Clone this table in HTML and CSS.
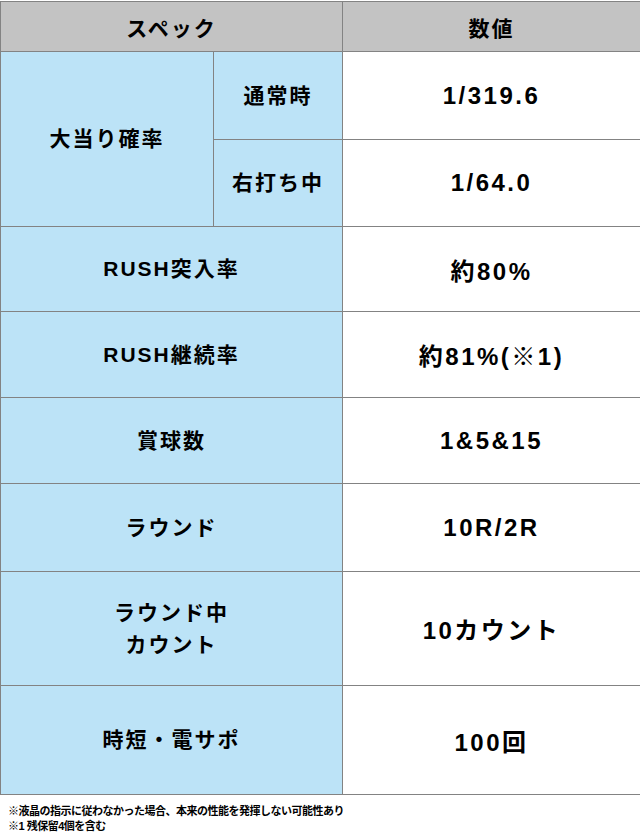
FILE: index.html
```html
<!DOCTYPE html>
<html lang="ja">
<head>
<meta charset="utf-8">
<link rel="stylesheet" href="styles.css">
</head>
<body>
<table class="spec">
  <colgroup><col class="c1"><col class="c2"><col class="c3"></colgroup>
  <tr class="r-head"><th colspan="2" class="head">スペック</th><th class="head">数値</th></tr>
  <tr class="r1"><td rowspan="2" class="lab">大当り確率</td><td class="lab">通常時</td><td class="val">1/319.6</td></tr>
  <tr class="r2"><td class="lab">右打ち中</td><td class="val">1/64.0</td></tr>
  <tr class="r3"><td colspan="2" class="lab">RUSH突入率</td><td class="val">約80%</td></tr>
  <tr class="r4"><td colspan="2" class="lab">RUSH継続率</td><td class="val">約81%(※1)</td></tr>
  <tr class="r5"><td colspan="2" class="lab">賞球数</td><td class="val">1&amp;5&amp;15</td></tr>
  <tr class="r6"><td colspan="2" class="lab">ラウンド</td><td class="val">10R/2R</td></tr>
  <tr class="r7"><td colspan="2" class="lab">ラウンド中<br>カウント</td><td class="val">10カウント</td></tr>
  <tr class="r8"><td colspan="2" class="lab">時短・電サポ</td><td class="val">100回</td></tr>
</table>
<div class="notes">
  <p>※液晶の指示に従わなかった場合、本来の性能を発揮しない可能性あり</p>
  <p>※1 残保留4個を含む</p>
</div>
</body>
</html>
```
FILE: styles.css
```css
html, body { margin: 0; padding: 0; background: #fff; }
body {
  font-family: "Liberation Sans", "Noto Sans CJK JP", sans-serif;
  color: #000;
  font-weight: bold;
}
.spec {
  border-collapse: collapse;
  width: 640px;
  margin-top: 1px;
  table-layout: fixed;
}
.c1 { width: 213px; }
.c2 { width: 129px; }
.c3 { width: 298px; }
.spec th, .spec td {
  border: 1px solid #838383;
  text-align: center;
  vertical-align: middle;
  padding: 0;
  font-weight: bold;
}
.head {
  background: #c3c3c3;
  font-size: 21px;
  letter-spacing: 2px;
  height: 49px;
}
.lab {
  background: #bce3f7;
  font-size: 21px;
  letter-spacing: 2px;
  line-height: 32px;
}
.val {
  background: #fff;
  font-size: 24px;
  letter-spacing: 2.5px;
}
.r1 td { height: 87px; }
.r2 td { height: 86px; }
.r3 td { height: 84px; }
.r4 td { height: 85px; }
.r5 td { height: 85px; }
.r6 td { height: 87px; }
.r7 td { height: 113px; }
.r8 td { height: 108px; }
.notes {
  padding: 9px 0 0 8px;
  font-size: 11px;
  line-height: 15px;
  letter-spacing: -0.5px;
}
.notes p { margin: 0; }
```
